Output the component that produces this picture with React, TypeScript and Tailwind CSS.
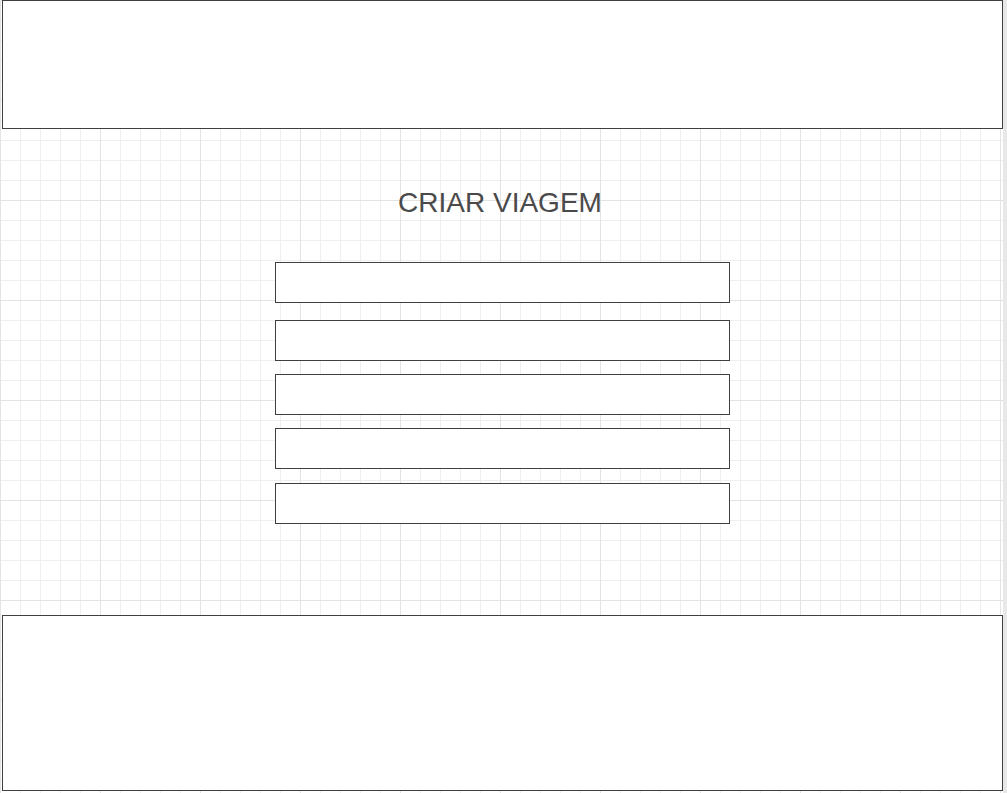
const gridBg =
    "bg-white bg-[linear-gradient(to_right,#e3e3e3_1px,transparent_1px),linear-gradient(to_bottom,#e3e3e3_1px,transparent_1px),linear-gradient(to_right,#efefef_1px,transparent_1px),linear-gradient(to_bottom,#efefef_1px,transparent_1px)] [background-size:100px_100px,100px_100px,20px_20px,20px_20px]"

const Field = ({ className = "" }: { className?: string }) => (
    <div className={`w-[455px] h-[41px] border border-[#3f3f3f] bg-white ${className}`} />
)

const App = () => {
    return (
        <div className="w-[1007px] h-[793px] flex overflow-hidden font-['Liberation_Sans',Arial,sans-serif]">
            <div className={`w-[1003px] h-full flex flex-col ${gridBg}`}>
                <div className="ml-[2px] w-[1001px] h-[129px] border border-[#3f3f3f] bg-white" />

                <div className="flex flex-col items-center">
                    <h1 className="mt-[58px] mr-[3px] text-[28px] leading-[32px] text-[#4a4a4a]">CRIAR VIAGEM</h1>

                    <div className="flex flex-col mt-[43px] ml-[2px]">
                        <Field />
                        <Field className="mt-[17px]" />
                        <Field className="mt-[13px]" />
                        <Field className="mt-[13px]" />
                        <Field className="mt-[14px]" />
                    </div>
                </div>

                <div className="ml-[2px] mt-[91px] w-[1001px] h-[176px] border border-[#3f3f3f] bg-white" />
            </div>
            <div className="w-[4px] h-full bg-[#e8e8e8]" />
        </div>
    )
}

export default App
